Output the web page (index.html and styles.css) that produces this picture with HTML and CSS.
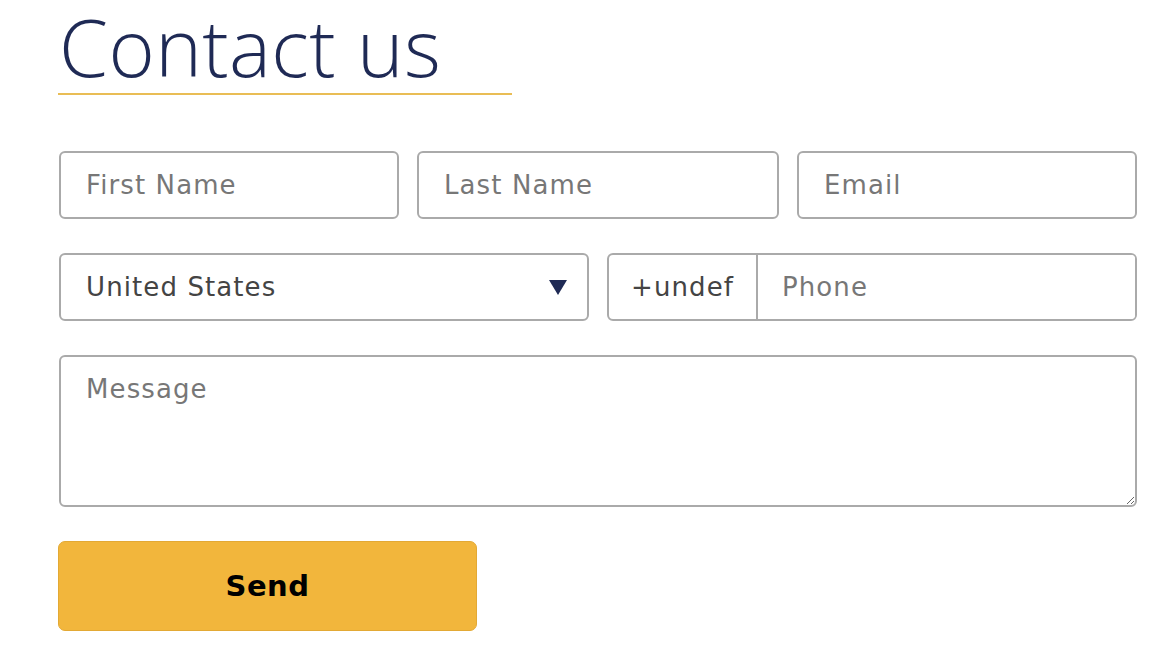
FILE: index.html
```html
<!DOCTYPE html>
<html lang="en">
<head>
<meta charset="utf-8">
<title>Contact us</title>
<link rel="stylesheet" href="styles.css">
</head>
<body>
<main class="contact">
  <h1 class="title">Contact us</h1>
  <form class="form">
    <div class="row row-3">
      <input class="field" type="text" placeholder="First Name">
      <input class="field" type="text" placeholder="Last Name">
      <input class="field" type="email" placeholder="Email">
    </div>
    <div class="row row-2">
      <div class="field select">
        <span class="select-value">United States</span>
        <svg class="select-arrow" width="18" height="15" viewBox="0 0 18 15"><polygon points="0,0 18,0 9,15" fill="#1f2a55"/></svg>
      </div>
      <div class="field phone">
        <span class="phone-prefix">+undef</span>
        <input class="phone-input" type="tel" placeholder="Phone">
      </div>
    </div>
    <textarea class="field message" placeholder="Message"></textarea>
    <button class="send" type="button">Send</button>
  </form>
</main>
</body>
</html>
```
FILE: styles.css
```css
* { box-sizing: border-box; }
body {
  margin: 0;
  background: #fff;
  font-family: "DejaVu Sans", "Open Sans", sans-serif;
}
.contact {
  width: 1078px;
  margin-left: 59px;
}
.title {
  display: block;
  margin: 0 0 0 -1px;
  padding: 0 0 0 1px;
  width: 454px;
  font-family: "Open Sans", sans-serif;
  font-size: 79px;
  line-height: 93px;
  font-weight: 300;
  letter-spacing: 0.4px;
  color: #1f2a55;
  border-bottom: 2px solid #e9bd55;
  white-space: nowrap;
}
.form {
  margin-top: 56px;
  display: flex;
  flex-direction: column;
  gap: 34px;
}
.row { display: grid; gap: 18px; }
.row-3 { grid-template-columns: 340fr 362fr 340fr; }
.row-2 { grid-template-columns: 1fr 1fr; }
.field {
  height: 68px;
  border: 2px solid #aaaaaa;
  border-radius: 6px;
  background: #fff;
  padding: 0 25px;
  font-family: inherit;
  font-size: 26px;
  letter-spacing: 1.1px;
  color: #444;
  outline: none;
  width: 100%;
}
.field::placeholder, .phone-input::placeholder { color: #777777; }
.select {
  display: flex;
  align-items: center;
  justify-content: space-between;
  padding-right: 20px;
}
.select-value { color: #444; }
.phone {
  display: flex;
  padding: 0;
  overflow: hidden;
}
.phone-prefix {
  flex: 0 0 149px;
  display: flex;
  align-items: center;
  justify-content: center;
  border-right: 2px solid #aaaaaa;
  color: #444;
}
.phone-input {
  flex: 1;
  border: 0;
  outline: none;
  padding: 0 24px;
  font-family: inherit;
  font-size: 26px;
  letter-spacing: 1.1px;
  color: #444;
  min-width: 0;
}
.message {
  height: 152px;
  padding: 17px 25px;
  resize: vertical;
  display: block;
}
.send {
  width: 419px;
  height: 90px;
  margin-left: -1px;
  border: 1px solid #e3a935;
  border-radius: 7px;
  background: #f2b63c;
  color: #000;
  font-family: inherit;
  font-size: 29px;
  letter-spacing: 0.5px;
  font-weight: 700;
  cursor: pointer;
}
```
